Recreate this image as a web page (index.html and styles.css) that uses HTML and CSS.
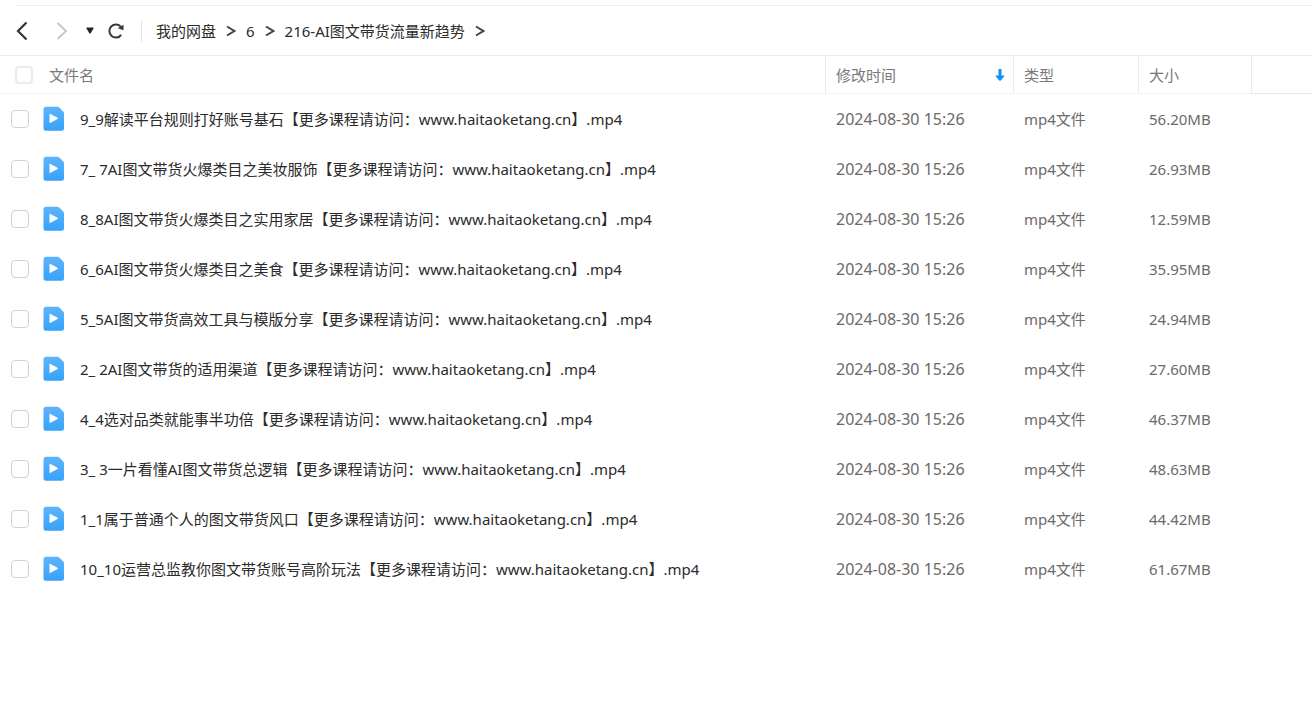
FILE: index.html
```html
<!DOCTYPE html>
<html lang="zh-CN">
<head>
<meta charset="utf-8">
<title>我的网盘</title>
<link rel="stylesheet" href="styles.css">
</head>
<body>
<svg class="defs" aria-hidden="true">
  <defs>
    <linearGradient id="file-fill" x1="0" y1="0" x2="0" y2="1">
      <stop offset="0" stop-color="#5fb4fc"/>
      <stop offset="1" stop-color="#35a2fb"/>
    </linearGradient>
    <symbol id="video" viewBox="0 0 22 26">
      <path fill="url(#file-fill)" d="M3 .7H14.5Q15.5.7 16.3 1.5L20.2 5.4Q21 6.2 21 7.2V22.3Q21 24.8 18.5 24.8H3Q.5 24.8.5 22.3V3.2Q.5.7 3 .7Z"/>
      <path fill="#fff" d="M6.5 8.6Q6.500 7.500 7.500 8L14.500 11.800Q15.400 12.400 14.500 13L7.500 16.800Q6.500 17.300 6.500 16.200Z"/>
    </symbol>
    <symbol id="chevron" viewBox="0 0 10 12">
      <path fill="none" stroke="#41454f" stroke-width="2" d="M1 1.500 8.300 6 1 10.500"/>
    </symbol>
  </defs>
</svg>
<header class="toolbar">
  <div class="controls">
    <button class="tool back" type="button" aria-label="后退"><svg width="12" height="20" viewBox="0 0 12 20"><path fill="none" stroke="#2f333d" stroke-width="2.200" d="M10.500 1.500 2 10 10.500 18.500"/></svg></button>
    <button class="tool forward" type="button" aria-label="前进"><svg width="12" height="20" viewBox="0 0 12 20"><path fill="none" stroke="#c6c7ca" stroke-width="2" d="M1.500 2 10 10 1.500 18"/></svg></button>
    <button class="tool history" type="button" aria-label="历史"><svg width="8" height="7" viewBox="0 0 8 7"><path fill="#20242e" d="M1 .5H7Q8 .5 7.500 1.500L4.700 6.200Q4 7 3.300 6.200L.5 1.500Q0 .5 1 .5Z"/></svg></button>
    <button class="tool" type="button" aria-label="刷新"><svg width="18" height="18" viewBox="0 0 18 18"><path fill="none" stroke="#353944" stroke-width="2" d="M14.200 12.800A6.500 6.500 0 1 1 14 5"/><path fill="#353944" d="M16.500 2.800V8.200L10.800 6.300Z"/></svg></button>
  </div>
  <nav class="crumbs" aria-label="路径">
    <a href="#">我的网盘</a>
    <svg class="sep"><use href="#chevron"/></svg>
    <a href="#">6</a>
    <svg class="sep"><use href="#chevron"/></svg>
    <a href="#">216-AI图文带货流量新趋势</a>
    <svg class="sep"><use href="#chevron"/></svg>
  </nav>
</header>
<table class="files">
  <colgroup><col><col class="col-time"><col class="col-type"><col class="col-size"><col class="col-rest"></colgroup>
  <thead>
    <tr>
      <th><label class="all"><input class="check" type="checkbox">文件名</label></th>
      <th><div class="sorted">修改时间<svg width="10" height="14" viewBox="0 0 10 14"><path fill="#0b93f8" d="M3.500 1.500Q3.500 1 4 1H6Q6.500 1 6.500 1.500V7.500H8.800Q9.800 7.500 9.200 8.500L5.700 12.400Q5 13 4.300 12.400L.8 8.500Q.2 7.500 1.200 7.500H3.500Z"/></svg></div></th>
      <th>类型</th>
      <th>大小</th>
      <th></th>
    </tr>
  </thead>
  <tbody>
    <tr><td><label class="name"><input class="check" type="checkbox"><svg class="icon"><use href="#video"/></svg>9_9解读平台规则打好账号基石【更多课程请访问：www.haitaoketang.cn】.mp4</label></td><td class="latin">2024-08-30 15:26</td><td>mp4文件</td><td>56.20MB</td><td></td></tr>
    <tr><td><label class="name"><input class="check" type="checkbox"><svg class="icon"><use href="#video"/></svg>7_ 7AI图文带货火爆类目之美妆服饰【更多课程请访问：www.haitaoketang.cn】.mp4</label></td><td class="latin">2024-08-30 15:26</td><td>mp4文件</td><td>26.93MB</td><td></td></tr>
    <tr><td><label class="name"><input class="check" type="checkbox"><svg class="icon"><use href="#video"/></svg>8_8AI图文带货火爆类目之实用家居【更多课程请访问：www.haitaoketang.cn】.mp4</label></td><td class="latin">2024-08-30 15:26</td><td>mp4文件</td><td>12.59MB</td><td></td></tr>
    <tr><td><label class="name"><input class="check" type="checkbox"><svg class="icon"><use href="#video"/></svg>6_6AI图文带货火爆类目之美食【更多课程请访问：www.haitaoketang.cn】.mp4</label></td><td class="latin">2024-08-30 15:26</td><td>mp4文件</td><td>35.95MB</td><td></td></tr>
    <tr><td><label class="name"><input class="check" type="checkbox"><svg class="icon"><use href="#video"/></svg>5_5AI图文带货高效工具与模版分享【更多课程请访问：www.haitaoketang.cn】.mp4</label></td><td class="latin">2024-08-30 15:26</td><td>mp4文件</td><td>24.94MB</td><td></td></tr>
    <tr><td><label class="name"><input class="check" type="checkbox"><svg class="icon"><use href="#video"/></svg>2_ 2AI图文带货的适用渠道【更多课程请访问：www.haitaoketang.cn】.mp4</label></td><td class="latin">2024-08-30 15:26</td><td>mp4文件</td><td>27.60MB</td><td></td></tr>
    <tr><td><label class="name"><input class="check" type="checkbox"><svg class="icon"><use href="#video"/></svg>4_4选对品类就能事半功倍【更多课程请访问：www.haitaoketang.cn】.mp4</label></td><td class="latin">2024-08-30 15:26</td><td>mp4文件</td><td>46.37MB</td><td></td></tr>
    <tr><td><label class="name"><input class="check" type="checkbox"><svg class="icon"><use href="#video"/></svg>3_ 3一片看懂AI图文带货总逻辑【更多课程请访问：www.haitaoketang.cn】.mp4</label></td><td class="latin">2024-08-30 15:26</td><td>mp4文件</td><td>48.63MB</td><td></td></tr>
    <tr><td><label class="name"><input class="check" type="checkbox"><svg class="icon"><use href="#video"/></svg>1_1属于普通个人的图文带货风口【更多课程请访问：www.haitaoketang.cn】.mp4</label></td><td class="latin">2024-08-30 15:26</td><td>mp4文件</td><td>44.42MB</td><td></td></tr>
    <tr><td><label class="name"><input class="check" type="checkbox"><svg class="icon"><use href="#video"/></svg>10_10运营总监教你图文带货账号高阶玩法【更多课程请访问：www.haitaoketang.cn】.mp4</label></td><td class="latin">2024-08-30 15:26</td><td>mp4文件</td><td>61.67MB</td><td></td></tr>
  </tbody>
</table>
</body>
</html>
```
FILE: styles.css
```css
* { box-sizing: border-box; }

body {
  margin: 0;
  padding-top: 5px;
  background: #fff;
  color: #2b2b2b;
  font-family: "Noto Sans", "Noto Sans CJK SC", sans-serif;
  font-size: 15px;
  line-height: 22px;
}

.defs { position: absolute; width: 0; height: 0; }

.toolbar {
  display: flex;
  align-items: center;
  height: 50px;
  margin-left: 16px;
  border-top: 1px solid #efefef;
}

.controls {
  display: flex;
  align-items: center;
  height: 22px;
  padding-right: 16px;
  border-right: 1px solid #e3e4e6;
}

.tool {
  display: flex;
  padding: 0;
  border: 0;
  background: none;
}

.back { margin-right: 28px; }
.forward { margin-right: 18px; }
.history { margin-right: 13px; }

.crumbs {
  display: flex;
  align-items: center;
  gap: 10px;
  padding-left: 14px;
}

.crumbs a { color: inherit; text-decoration: none; }
.sep { width: 10px; height: 12px; }

.files {
  width: 100%;
  table-layout: fixed;
  border-collapse: separate;
  border-spacing: 0;
}

.col-time { width: 188px; }
.col-type { width: 125px; }
.col-size { width: 113px; }
.col-rest { width: 61px; }

th, td {
  padding: 0 0 0 10px;
  text-align: left;
  white-space: nowrap;
}

th {
  height: 39px;
  border-top: 1px solid #ededed;
  border-bottom: 1px solid #f3f3f3;
  border-left: 1px solid #ebebeb;
  color: #77797d;
  font-weight: 400;
}

th:first-child { border-left: 0; padding-left: 15px; }
th:last-child { border-bottom-color: #e8e8e8; }

td { height: 50px; padding-left: 11px; color: #6a6a6a; }
td:first-child { color: #2b2b2b; }
.latin { font-size: 16px; }

.all, .name, .sorted { display: flex; align-items: center; }
.all { gap: 16px; }
.sorted { justify-content: space-between; padding-right: 8px; }

.check {
  appearance: none;
  width: 18px;
  height: 18px;
  margin: 0;
  border: 1px solid #cfd3d8;
  border-radius: 4px;
  background: #fff;
}

.all .check { border: 2px solid #ebebeb; }
.check:checked { background: #0b93f8; }
.icon { width: 22px; height: 26px; margin: 0 15px 0 14px; }
```
